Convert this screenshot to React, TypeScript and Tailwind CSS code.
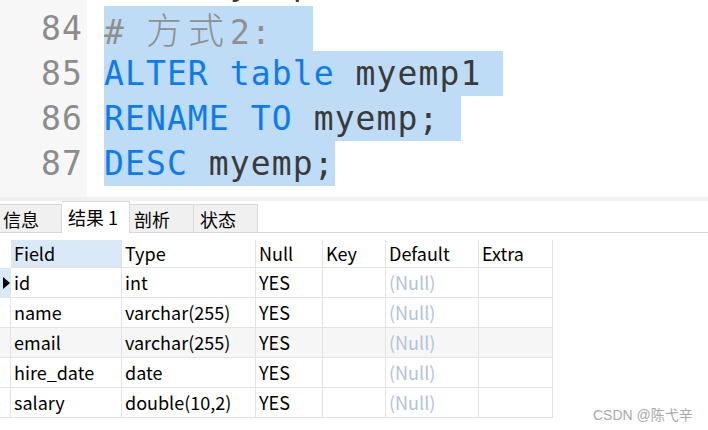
import React from "react";

const mono = { fontFamily: '"DejaVu Sans Mono", "Liberation Mono", monospace' };
const cjk = { fontFamily: '"Noto Sans CJK SC", "Noto Sans", sans-serif' };

type Line = { num: string; sel: number; content: React.ReactNode };

const K = ({ children }: { children: React.ReactNode }) => (
  <span className="text-[#0b7bf3]">{children}</span>
);
const I = ({ children }: { children: React.ReactNode }) => (
  <span className="text-[#3a3a3a]">{children}</span>
);

const lines: Line[] = [
  { num: "83", sel: 0, content: (<><K>DESC</K><I> myemp1;</I></>) },
  {
    num: "84",
    sel: 209,
    content: (
      <span className="text-[#8f8f8f]">
        #{" "}
        <span className="text-[36px] tracking-[6px] font-light" style={cjk}>方式</span>
        2:
      </span>
    ),
  },
  { num: "85", sel: 399, content: (<><K>ALTER table</K><I> myemp1</I></>) },
  { num: "86", sel: 357, content: (<><K>RENAME TO</K><I> myemp;</I></>) },
  { num: "87", sel: 231, content: (<><K>DESC</K><I> myemp;</I></>) },
];

const cols = ["Field", "Type", "Null", "Key", "Default", "Extra"];
const rows = [
  ["id", "int", "YES", "", "(Null)", ""],
  ["name", "varchar(255)", "YES", "", "(Null)", ""],
  ["email", "varchar(255)", "YES", "", "(Null)", ""],
  ["hire_date", "date", "YES", "", "(Null)", ""],
  ["salary", "double(10,2)", "YES", "", "(Null)", ""],
];

export default function App() {
  return (
    <div className="relative w-[708px] h-[430px] overflow-hidden bg-white">
      {/* Editor */}
      <div className="h-[197px] overflow-hidden bg-white flex">
        <div className="w-[87px] bg-[#f7f7f7] shrink-0" />
        <div className="flex-1" />
      </div>
      <div className="absolute left-0 top-0 w-[708px] h-[197px] overflow-hidden">
        <div className="flex flex-col mt-[-39px]">
          {lines.map((l) => (
            <div key={l.num} className="flex h-[45px] text-[33px] leading-[45px] tracking-[1.1px]" style={mono}>
              <div className="w-[87px] shrink-0 bg-[#f7f7f7] text-right pr-[4px] text-[#8c8c8c]">{l.num}</div>
              <div className="pl-[17px] relative flex">
                {l.sel > 0 && (
                  <div className="absolute left-[17px] top-0 h-[45px] bg-[#bfdcf7]" style={{ width: l.sel }} />
                )}
                <span className="relative whitespace-pre">{l.content}</span>
              </div>
            </div>
          ))}
        </div>
      </div>

      {/* Separator strip */}
      <div className="h-[4px] bg-[#f0f0f0]" />

      {/* Tabs */}
      <div className="flex items-end h-[32px] border-b border-[#d9d9d9] text-[18px] text-black" style={cjk}>
        <div className="w-[62px] h-[29px] bg-[#f0f0f0] border-r border-t border-[#d9d9d9] pl-[3px] leading-[28px] mb-[-1px] border-b">信息</div>
        <div className="w-[68px] h-[32px] bg-white border-r border-t border-[#d9d9d9] pl-[6px] leading-[31px] mb-[-1px] relative">结果 1</div>
        <div className="w-[64px] h-[29px] bg-[#f0f0f0] border-r border-t border-[#d9d9d9] pl-[4px] leading-[28px] mb-[-1px] border-b">剖析</div>
        <div className="w-[64px] h-[29px] bg-[#f0f0f0] border-r border-t border-[#d9d9d9] pl-[6px] leading-[28px] mb-[-1px] border-b">状态</div>
      </div>

      {/* Table */}
      <div className="pt-[7px]" style={cjk}>
        <div className="grid grid-cols-[11px_111px_134px_67px_63px_93px_74px] text-[18px] text-black w-[553px]">
          <div className="h-[28px]" />
          {cols.map((c, i) => (
            <div
              key={c}
              className={`h-[28px] leading-[27px] pl-[3px] border-r border-b border-[#e3e3e3] ${i === 0 ? "bg-[#d9e9f7]" : ""}`}
            >
              {c}
            </div>
          ))}
          {rows.map((r, ri) => (
            <React.Fragment key={ri}>
              <div
                className={`h-[30px] border-r border-b border-[#e3e3e3] flex items-center ${ri === 0 ? "bg-[#d9e9f7]" : ri === 2 ? "bg-[#f6f6f6]" : ""}`}
              >
                {ri === 0 && (
                  <svg width="7" height="12" viewBox="0 0 7 12" className="ml-[3px]">
                    <path d="M0 0 L7 6 L0 12 Z" fill="#000" />
                  </svg>
                )}
              </div>
              {r.map((v, ci) => (
                <div
                  key={ci}
                  className={`h-[30px] leading-[29px] pl-[3px] border-r border-b border-[#e3e3e3] ${ri === 2 ? "bg-[#f6f6f6]" : ""} ${v === "(Null)" ? "text-[#b3c2dc]" : ""}`}
                >
                  {v}
                </div>
              ))}
            </React.Fragment>
          ))}
        </div>
      </div>

      {/* Watermark */}
      <div
        className="absolute left-[593px] top-[405px] text-[14px] text-[#a9a9a9]"
        style={{ fontFamily: '"Liberation Sans", "Noto Sans CJK SC", sans-serif' }}
      >
        CSDN @陈弋辛
      </div>
    </div>
  );
}
